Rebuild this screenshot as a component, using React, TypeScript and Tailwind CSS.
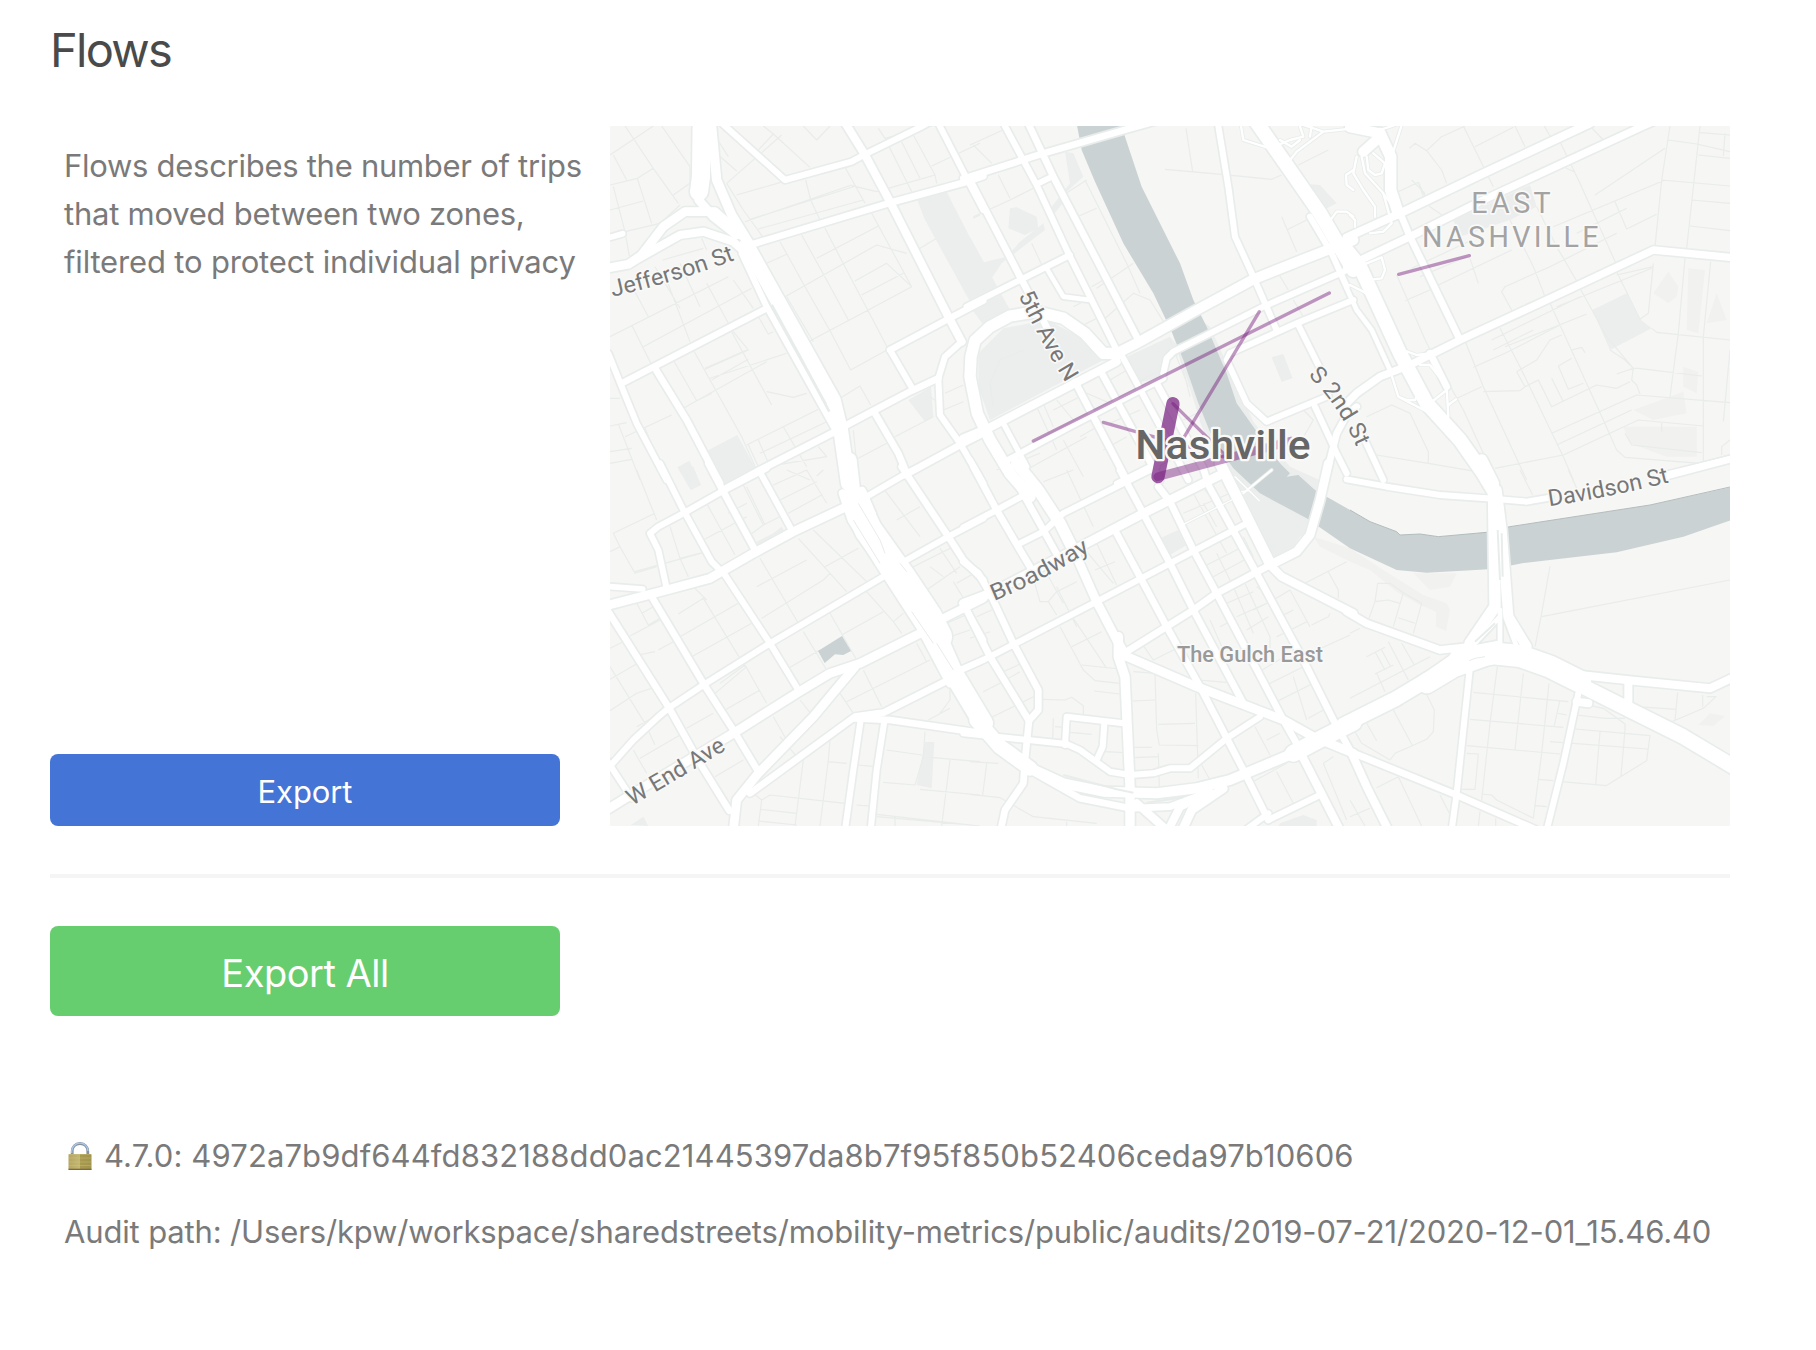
type Road = [width: number, d: string];
type Tile = { x: number; y: number; roads: Road[]; minor: string; areas: string };

const RIVER =
  'M318 0L335 90L375 185L460 370L550 520L605 635L640 720L685 850L730 960L790 1045L870 1120L1010 1195L1140 1285L1280 1350L1370 1358L1555 1348L1630 1335L1660 1329L1940 1297L2140 1250L2290 1198L2290 1100L2040 1155L1620 1220L1550 1237L1405 1250L1350 1242L1290 1245L1280 1235L1200 1205L1140 1170L1070 1130L1035 1110L985 1065L950 1070L960 1060L930 1030L850 920L800 850L770 760L710 620L670 540L630 430L515 200L465 50L455 0Z';

const tiles: Tile[] = [
  {
    x: 1800,
    y: 360,
    areas:
      'M950 235L1040 215L1065 265L1140 410L1140 550L1110 545L1000 345L975 300ZM925 840L993 800L1000 890L975 905ZM320 993L412 945L470 1050L365 1105ZM232 1042L268 1022L303 1095L272 1110Z',
    roads: [
      [54, 'M305 0L303 170L297 215'],
      [26, 'M296 215L296 240L340 290L410 345'],
      [28, 'M333 0L350 180L395 285L450 375'],
      [26, 'M20 445L85 433L125 405L190 320L255 275L345 275L430 350'],
      [24, 'M90 430L160 390L240 345L310 335L400 365L450 410'],
      [44, 'M440 375L560 590L700 840L722 930L745 1090'],
      [18, 'M425 400L500 560L600 740L706 930'],
      [17, 'M20 355L68 341'],
      [20, 'M440 378L865 250L1095 187L1150 168'],
      [18, 'M355 0L555 180L755 125L795 103L960 22L1000 0'],
      [24, 'M730 0L795 105L870 245L1045 590L1085 665'],
      [18, 'M1010 0L1105 185L1150 270'],
      [19, 'M870 690L1045 597L1150 542'],
      [18, 'M870 690L935 802'],
      [19, 'M65 790L500 565'],
      [18, 'M25 700L65 800L110 910L200 1080'],
      [20, 'M165 745L260 900L360 1090'],
      [18, 'M1085 665L1035 710L1015 775L1020 885L1080 970L1140 1075'],
      [20, 'M740 915L935 812L1015 775'],
      [20, 'M825 880L895 1000L920 1060'],
      [20, 'M715 930L480 1050L365 1112'],
      [20, 'M915 1065L1080 975L1150 940'],
    ],
    minor:
      'M75 18L160 145L235 250M30 105L160 18M40 105L80 180M30 195L112 175L160 145M112 175L155 310M30 270L130 243M40 200L75 335L88 408M75 335L180 310L240 255M185 18L270 140L270 190L220 225M355 105L410 153M350 55L385 110M380 190L545 45M475 90L520 42L490 18M520 42L630 142M610 18L650 60L690 18M380 190L430 270L490 353M410 225L550 185M617 180L632 240L660 300M435 305L755 195M450 298L760 200M475 327L790 240M735 142L795 250M755 197L830 215M835 25L855 55L1140 -20M865 75L935 215M905 65L960 175M940 45L1005 165L1010 190M830 215L1005 165M995 138L1140 70M960 385L1010 355M500 430L560 403M540 365L615 500L690 632L752 750L865 688M605 345L680 480L745 600M675 325L745 460L865 688M555 530L830 375L920 400M650 415L835 318M765 483L860 430M785 525L910 460M860 430L935 500L805 570L625 665M815 280L935 500M560 530L640 665M188 420L310 385M305 355L320 390M165 440L240 565M240 430L300 560M30 650L385 470M130 680L455 505M95 615L160 745M105 515L145 590M200 480L270 665M320 490L385 610M400 480L460 565M220 720L290 842L335 820M280 690L425 950L470 1050M315 745L440 690M315 748L445 690L400 635M335 780L445 718M330 775L560 700M250 865L500 725M395 635L515 855M500 815L580 832L620 820M475 590L505 642L520 635M440 975L655 868M480 1000L680 905M445 975L475 1040M475 960L510 1040M550 920L620 1040M500 1040L680 1010L655 980M720 835L780 798L812 855M885 950L1000 890M775 1015L860 970M760 930L775 1080M30 835L60 835M30 918L80 908M30 995L95 985M30 1030L95 1018M55 912L120 1080M75 950L215 885M135 925L160 985M1035 820L1090 795M1030 870L1090 845M990 830L1010 845M1120 295L1140 285',
  },
  {
    x: 2910,
    y: 360,
    areas:
      'M0 350L120 570L40 615L0 560ZM120 265L140 262L200 290L205 325L165 345L115 325ZM30 430L110 410L150 365L220 310L225 330L95 430L65 475ZM285 95L310 100L340 170L290 215L290 235L250 285L245 260L300 190ZM25 700L100 625L230 600L350 660L400 720L60 900L25 800ZM470 710L600 650L640 700L590 720L580 770L500 790ZM905 712L940 702L968 775L935 785ZM680 590L720 620L850 905L960 1040L1060 1085L1080 1200L990 1250L940 1330L880 1300L780 1080L690 900L610 650ZM985 190L1050 195L1100 250L1060 270Z',
    roads: [
      [20, 'M-20 175L0 170L220 100L470 28L570 0'],
      [20, 'M0 180L150 470L240 640'],
      [20, 'M315 785L470 1080'],
      [18, 'M95 0L200 195L295 400L445 700'],
      [20, 'M170 0L250 170L500 650'],
      [17, 'M205 190L250 168'],
      [18, 'M-10 560L80 515L300 405'],
      [14, 'M230 445L280 530L360 540'],
      [34, 'M450 700L400 700L345 640L280 595L200 575L120 588L60 620L15 662L3 710L0 770L22 880L60 960L120 1060L180 1130'],
      [30, 'M430 705L500 670L680 570L850 478L1000 418L1150 360'],
      [24, 'M-20 955L60 922L440 725'],
      [18, 'M110 1022L300 920L580 775'],
      [18, 'M580 760L590 715L610 695L720 640L880 560L1110 460L1150 440'],
      [18, 'M742 0L775 200L795 350L850 470L920 630'],
      [18, 'M1150 540L980 610L780 700L770 720L830 850L890 905L1075 828'],
      [18, 'M985 615L1050 745'],
      [42, 'M855 0L960 150L1050 280L1150 450'],
      [18, 'M1020 290L1085 400L1130 500'],
      [18, 'M460 715L560 900L655 1080'],
      [20, 'M390 750L570 1080'],
      [20, 'M560 790L700 1045L715 1095'],
      [16, 'M440 1090L700 960'],
      [18, 'M1035 860L1100 1000L1130 1060'],
      [20, 'M1065 1080L1100 940L1130 885L1160 860'],
      [16, 'M100 910L170 1040'],
      [7, 'M810 0L820 60L900 85L960 60L1000 50L990 20'],
      [7, 'M930 60L965 80L990 60M1150 25L1060 35L1000 15M1025 15L1020 50M1060 35L980 95L960 120'],
      [7, 'M1085 295L1100 275L1130 275L1150 290M1150 150L1128 165L1130 195L1150 210'],
    ],
    minor:
      'M85 165L120 235M10 75L65 130M10 290L120 240L220 190M0 75L110 25M345 180L470 430L510 520M345 180L420 330M300 300L380 265M280 225L350 180M585 148L755 163L905 178L935 165M648 25L668 155M985 135L1075 90M935 290L980 395M950 330L1010 300M185 370L220 445M330 620L400 585M310 560L360 535M380 505L490 430M400 600L490 520L540 540L590 620M365 500L400 480M925 460L955 510M970 540L1000 590M420 780L480 745M500 790L550 760M200 860L260 990M260 840L310 900M250 870L330 830M350 820L420 850M215 840L250 920M80 1050L210 1000M160 690L90 720L60 790L70 860M150 1060L350 950M280 960L340 1070M330 950L400 910M400 990L470 950M420 910L510 870M690 900L740 1020M640 900L700 870M615 650L660 830M600 660L655 800M960 1020L1030 900L1000 870M900 930L960 1010',
  },
  {
    x: 4050,
    y: 360,
    areas:
      'M310 300L540 195L560 260L480 300L330 350ZM727 570L830 520L870 598L905 625L780 690Z',
    roads: [
      [24, 'M-10 352L150 280L400 160L720 10'],
      [22, 'M-10 440L180 350L400 240L880 18L920 0'],
      [42, 'M-10 390L30 440L150 700L230 850L330 960L400 1060L430 1110'],
      [14, 'M-10 505L20 570L65 630L120 750'],
      [20, 'M155 290L180 350L330 660'],
      [22, 'M-10 850L20 820L90 770L180 735L330 660L590 540L910 390L1150 413'],
      [34, 'M90 40L122 110L122 210L145 280'],
      [30, 'M0 22L90 40M90 50L40 95'],
      [20, 'M240 700L290 800'],
      [18, 'M35 940L100 1080'],
      [20, 'M950 1068L1150 1015'],
      [7, 'M90 30L150 10M125 110L155 15M20 110L10 160L40 210L75 260L75 290M35 110L45 160L100 220L145 280M50 110L55 150L75 165L95 160L105 130L70 100M0 285L15 300L15 320M100 220L125 310L100 335L60 340'],
      [7, 'M50 430L95 412L105 450L95 475L70 478M0 495L50 520M120 750L145 830L170 840L195 840L205 820M145 830L240 880M210 735L240 735L290 800L295 890M160 690L200 705L240 700M240 850L290 810M295 855L318 838'],
    ],
    minor:
      'M178 85L195 70L230 92L275 150L290 190M230 92L275 50L345 18M340 18L430 200M375 80L490 22M495 18L525 80M583 18L600 48M630 65L690 190L800 435M720 18L760 60M145 215L205 187L220 230M205 187L240 260L290 295L330 290M185 180L225 220M640 140L672 155M560 260L620 380L690 500M480 300L550 440L585 530M610 320L945 180M735 225L945 85M795 245L830 327L920 283M680 340L830 265M960 18L935 180L915 380M955 60L1040 72L1140 95M1050 18L1010 385M1050 38L1140 45M1125 40L1120 108M1045 105L1140 115M935 180L1140 198M1025 240L1140 250M1020 318L1140 332M185 445L355 365M210 470L350 410M265 495L485 390M360 415L385 490M490 580L455 515L465 500L600 440L800 340M165 542L240 510M140 465L230 670L340 870L400 1000M340 650L400 800L530 1080M335 665L480 600M370 742L465 700L640 610M450 625L510 740L640 1010L670 1080M600 550L760 900L800 990L825 1012L1050 1030M690 505L770 650L850 745M800 455L870 598L895 580L910 430M1005 415L985 640L960 830M1082 425L1060 650L1060 1030M1140 690L1120 905M425 660L690 530M430 690L550 630M465 680L710 582M800 465L910 440M620 560L905 445M905 625L920 637L1140 660M780 690L825 720L850 745L865 745L1055 768M800 762L850 745L845 780L860 795L870 822M500 755L560 720L600 660L635 645M500 755L525 800L565 780L605 860L740 795L800 805L840 785M665 690L695 682L705 698M625 738L665 715M625 738L655 808L700 790M605 775L640 845M400 815L510 812L525 800M605 940L860 825L1140 848M620 975L845 870M640 1005L865 900L1060 918M825 940L845 975L1055 998M50 890L125 855L180 880L235 995L235 1030M80 1005L235 1030L380 1055M435 1045L640 1005M310 840L395 800M1140 960L1115 980L1115 1005M935 905L935 935',
  },
  {
    x: 1800,
    y: 1410,
    areas:
      'M338 0L395 -20L450 0L365 55ZM240 0L280 -10L303 45L272 60ZM470 215L520 190L545 170L560 195L480 235ZM975 815L1003 817L995 955L950 945ZM92 1065L130 1040L145 1068Z',
    roads: [
      [26, 'M20 407L200 360L330 325L460 250L580 185L740 110'],
      [17, 'M20 349L128 357'],
      [18, 'M200 355L175 240L150 190L175 170L250 130L365 65L500 -5'],
      [18, 'M180 -20L250 120L335 275L375 315L510 520L595 660'],
      [20, 'M325 -20L370 65L465 240'],
      [18, 'M482 10L575 180'],
      [20, 'M155 380L310 640L400 780L475 905'],
      [20, 'M25 425L205 710L300 880L388 1022'],
      [18, 'M20 900L100 810L170 745L205 715L310 645L510 520L850 320'],
      [18, 'M20 870L95 985'],
      [26, 'M20 1020L100 970L400 790L590 670L690 610L780 580L960 490'],
      [24, 'M960 490L1030 445L1150 385'],
      [26, 'M765 590L640 740L475 910L410 990L400 1080'],
      [20, 'M450 970L765 740L850 728L1045 630'],
      [20, 'M765 745L870 750L1150 790'],
      [18, 'M782 750L760 900L735 1080'],
      [18, 'M852 760L830 900L812 1080'],
      [18, 'M920 270L1045 200L1150 145'],
      [18, 'M800 80L920 10L950 -5'],
      [20, 'M905 -10L1045 200L1090 270L1150 330'],
      [18, 'M1100 420L1150 510'],
      [18, 'M1080 600L1150 570'],
      [24, 'M728 70L755 150L850 300L960 470L1050 640'],
      [44, 'M748 -30L758 60L775 110'],
      [24, 'M786 62L815 130'],
      [82, 'M775 115L805 180L905 320L985 440L1015 500'],
      [58, 'M985 440L1060 610L1150 760'],
      [18, 'M1110 -30L1150 40'],
    ],
    minor:
      'M110 0L170 150M30 245L60 230L40 190L165 130M60 230L105 310L170 290M105 305L320 245M210 170L240 265L265 320M240 265L320 245M300 215L440 140M265 140L330 270M320 100L405 255M430 45L490 165L450 195M490 165L560 130M440 50L495 165M385 130L440 100M520 45L620 0M540 90L650 35M565 130L665 75M620 0L680 100M650 18L670 0M480 265L595 460M470 350L620 270M485 445L670 330L690 310M595 205L740 365M640 180L800 335M675 290L775 235M630 30L560 0M235 432L310 385L435 590M285 355L320 390M240 500L415 400M275 560L455 460M110 400L145 465L180 445M125 430L160 410M90 498L180 450M115 555L165 545M175 540L220 515M30 535L70 515M30 628L130 570M30 590L135 760L165 825M30 722L110 670L155 655M110 770L235 700M260 775L340 730M120 865L240 795M100 840L140 910M345 920L430 870M360 640L435 585L500 700M375 720L480 660M345 670L440 590M400 770L600 660M520 740L560 810M600 690L640 740M540 800L590 860M565 595L660 540M610 485L680 600M690 430L770 570M725 495L850 425M800 365L880 455L905 490M880 455L910 430M850 55L960 200M890 150L960 110M940 290L1060 230M1020 235L1070 310M980 360L1080 290M1060 335L1100 400M1070 340L1140 300M990 290L1030 320M1040 460L1110 430M1050 500L1110 480M740 695L990 570M790 600L845 710M720 670L760 730M950 520L980 575M985 750L1050 715M1050 650L1050 690L1020 730M610 870L585 1068M690 810L685 870L660 1068M685 875L740 880M485 990L510 975L735 1000M485 990L475 1068M480 1018L590 1030M475 1053L590 1065M460 970L485 990M775 885L825 890M770 1005L825 1010M860 840L965 855M975 785L970 860L945 945L850 937M990 862L1140 875M1050 870L1025 1068M960 958L1140 975M830 1033L1140 1068M830 1040L1110 1065M885 1040L885 1068',
  },
  {
    x: 2910,
    y: 1410,
    areas: 'M570 205L625 180L650 225L600 255ZM930 1060L1000 1035L1040 1050L1040 1080L920 1080Z',
    roads: [
      [26, 'M-20 400L60 370L340 225L520 130L760 10'],
      [18, 'M-20 597L60 560L380 395L600 280L830 160'],
      [20, 'M470 545L590 470L670 420L740 370L900 285'],
      [26, 'M900 285L980 245L1020 195L1050 90L1075 -20'],
      [18, 'M150 220L220 185L280 130L470 35L560 -10'],
      [18, 'M-20 172L80 120L200 55'],
      [20, 'M10 -10L80 120L150 240L180 290'],
      [20, 'M120 0L220 180L270 270'],
      [34, 'M140 -20L205 60L270 160L315 250'],
      [26, 'M315 250L380 395L440 510L470 560'],
      [20, 'M-20 275L25 310L60 370L130 520L205 660L205 720L177 752L60 560L-10 420'],
      [20, 'M177 752L165 870L160 940L105 1020L92 1080'],
      [18, 'M-20 790L290 822L330 840L420 905L480 915L550 910L600 895L660 895L770 805L870 740'],
      [18, 'M285 825L290 740L460 760'],
      [18, 'M403 760L398 830L380 870'],
      [28, 'M445 500L445 560L465 620L480 950L480 1080'],
      [26, 'M460 555L680 650L940 750L1030 800L1150 850'],
      [20, 'M440 190L590 470L690 650L820 900L895 1050'],
      [20, 'M450 0L600 280L670 420L820 700'],
      [20, 'M565 50L600 95L670 240L740 370L940 750L985 830'],
      [20, 'M715 45L860 310L1000 570L1090 750L1140 840'],
      [32, 'M750 -20L900 280'],
      [24, 'M900 285L935 320L1150 430'],
      [44, 'M20 750L90 830L180 895'],
      [30, 'M160 885L280 940L400 965L560 970L680 955L780 930L970 850'],
      [20, 'M180 900L330 985L480 1015L600 1010L720 965'],
      [50, 'M970 850L1060 803L1150 757'],
      [26, 'M635 1085L665 1020L760 955'],
      [24, 'M595 1080L630 1010L700 975M500 1000L590 1080'],
      [18, 'M820 1085L895 1030M895 1050L1050 975'],
      [24, 'M1000 865L1110 1080'],
      [6, 'M820 70L905 0'],
      [4, 'M795 20L868 92M815 65L835 62M640 163L785 90'],
    ],
    minor:
      'M220 35L310 0M290 0L370 170M180 290L210 395L235 395L260 435M235 395L260 365L320 335M260 350L320 470M350 245L430 340M375 300L435 275M380 220L440 345M270 470L340 600L375 632L450 640M305 530L395 485M310 445L410 595M335 585L450 597M373 663L450 672M230 310L280 400M0 505L60 485M20 440L65 420M40 665L90 640L150 605M65 742L190 680M90 610L155 580M215 688L285 690L305 682L340 707L340 735M250 745L248 810M255 770L285 772M300 787L365 793M0 875L85 880M50 880L38 975M0 973L90 983L190 1040L380 1060M290 1055L290 1068M405 845L460 848M555 610L560 780L568 825L685 827M677 670L685 925M487 693L555 690M565 763L675 760M490 832L545 832M490 863L565 860M565 850L568 955M490 605L555 610M685 630L770 637M515 520L550 570L640 525M670 70L770 250M640 130L780 70M700 100L740 170M705 60L760 130M700 290L810 235M730 320L840 260M740 250L790 350M790 350L850 490M820 330L900 500L900 560M770 400L850 365M800 440L890 400M830 480L895 440M850 420L900 395M910 390L960 360M960 360L1020 470M930 440L970 420M920 500L1010 455M1005 340L1130 275M1075 305L1105 360L1105 385M1025 465L1075 440L1080 430M1020 550L1140 495M860 610L960 550M880 650L1000 590M910 700L1030 640M970 620L1010 750M1015 745L1060 720M750 470L790 450M720 450L760 540M695 885L720 930M855 770L900 855M890 810L930 790M840 940L950 880M920 905L970 1000M1060 880L1130 1050M1060 880L1090 860M820 200L850 260M860 350L920 400',
  },
  {
    x: 4050,
    y: 1410,
    areas: '',
    roads: [
      [18, 'M-10 28L110 50L270 75L410 85L530 95L600 83'],
      [18, 'M945 15L1150 -35'],
      [22, 'M-10 425L50 460L270 540L360 530'],
      [34, 'M395 -30L430 40L432 180L435 410L360 520'],
      [30, 'M440 60L455 180L475 440L530 530'],
      [14, 'M450 420L450 520M470 450L500 530M450 440L370 525'],
      [44, 'M-20 765L140 685L240 625L340 555L440 535'],
      [60, 'M230 640L310 592L400 560'],
      [66, 'M330 568L430 550L510 558L600 590L690 635'],
      [44, 'M660 625L700 650L860 730L1000 800L1150 890'],
      [24, 'M690 615L850 632L1080 655L1150 622'],
      [24, 'M835 640L835 705'],
      [20, 'M-20 835L0 845L320 975L560 1080'],
      [24, 'M5 850L50 950L115 1080'],
      [18, 'M360 590L320 970L305 1080'],
      [18, 'M685 670L640 880L590 1080'],
      [24, 'M680 695L715 700'],
    ],
    minor:
      'M510 0L548 75M655 0L680 55M600 288L575 430L555 530M575 440L1140 330M57 445L75 395L83 340L120 340L160 368L215 400L190 490M75 395L115 390L150 400M160 368L130 470M145 443L195 460M0 490L30 475M50 560L105 532M75 545L105 600M95 540L122 590M115 515L175 630M155 520L193 585M75 612L130 585M80 610L105 665M0 685L240 560M228 670L253 720L250 785L230 808L185 828L135 850L120 870L35 820L15 785M130 720L188 828M50 760L80 812M370 667L655 695M360 748L640 772M350 827L630 852M442 590L420 760L395 990M520 610L495 840M597 640L575 850L550 1045M630 690L612 770M625 730L650 735M350 850L385 852L375 958L335 958M395 972L425 975L440 990L550 1045M565 928L610 932M555 1007L590 1010M600 815L893 837M675 777L900 797L890 872L768 947L635 935M750 785L737 945M680 735L765 745L825 745M690 700L760 715L825 762L825 780L813 918M860 710L980 718M983 668L975 750M1058 675L1058 710M1070 680L1098 680L1060 715L965 755M850 710L905 735L940 765M80 953L145 920L215 1068M0 1040L60 1015M0 990L45 1068M270 975L298 1030M390 1025L385 1068M437 1045L437 1068',
  },
];

const flows: Road[] = [
  [40, 'M609 851L564 1070'],
  [26, 'M564 1070L965 963'],
  [10, 'M190 963L1078 519'],
  [10, 'M868 575L640 955'],
  [10, 'M609 851L760 1000'],
  [10, 'M400 907L760 1010'],
  [10, 'M1286 463L1498 407'],
];

function FlowMap() {
  return (
    <svg viewBox="1830 378 3360 2100" className="block h-[700px] w-[1120px] shrink-0 bg-[#f6f6f4]" role="img" aria-label="Nashville flows map">
      <defs>
        <path id="jefferson" d="M1838 890Q2010 852 2215 776" />
        <path id="fifth" d="M3055 886Q3114 1012 3199 1152" />
        <path id="second" d="M3924 1126Q4018 1218 4073 1348" />
        <path id="broadway" d="M2983 1803Q3121 1747 3271 1652" />
        <path id="davidson" d="M4648 1519Q4828 1492 5028 1442" />
        <path id="westend" d="M1896 2418Q2046 2330 2186 2245" />
      </defs>

      <path
        fill="#f1f1ef"
        d="M4960 880L5005 815L5035 860L5030 890L5005 910ZM5065 805L5115 810L5095 1000L5060 990ZM5120 970L5150 880L5180 960ZM5050 1100L5095 1115L5090 1180L5050 1160ZM4900 1230L5050 1175L5060 1240L4960 1260ZM4870 1280L5090 1280L5090 1370L5000 1370L4890 1330ZM4240 1720L4370 1720L4350 1760L4290 1770ZM3940 1610L4050 1645L4150 1710L4270 1785L4340 1810L4350 1830L4338 1893L4308 1880L4308 1835L4260 1815L4190 1775L4110 1710L4050 1685L3960 1640ZM5095 2175L5130 2140L5175 2148L5140 2178Z"
      />
      {tiles.map((t, i) => (
        <path key={i} transform={`translate(${t.x} ${t.y})`} d={t.areas} fill="#eceeed" />
      ))}
      {tiles.map((t, i) => (
        <path key={i} transform={`translate(${t.x} ${t.y})`} d={t.minor} fill="none" stroke="#e8ecea" strokeWidth="3.4" strokeLinejoin="round" />
      ))}
      <path transform="translate(2910 360)" d={RIVER} fill="#cad2d3" />
      <path d="M4050 1530L4110 1565L4190 1595L4200 1605L4260 1602L4315 1610L4460 1597L4530 1580L4950 1515L5190 1461" fill="none" stroke="#b4bdbe" strokeWidth="3" />
      <path d="M2454 1953L2526 1908L2553 1953L2530 1965L2505 1963L2474 1989Z" fill="#cad2d3" />

      <g fill="none" stroke="#e8edeb" strokeLinecap="round" strokeLinejoin="round">
        {tiles.map((t, i) => (
          <g key={i} transform={`translate(${t.x} ${t.y})`}>
            {t.roads.map(([w, d], j) => (
              <path key={j} d={d} strokeWidth={w < 10 ? w + 5 : w + 10} />
            ))}
          </g>
        ))}
      </g>
      <g fill="none" stroke="#ffffff" strokeLinecap="round" strokeLinejoin="round">
        {tiles.map((t, i) => (
          <g key={i} transform={`translate(${t.x} ${t.y})`}>
            {t.roads.map(([w, d], j) => (
              <path key={j} d={d} strokeWidth={w} />
            ))}
          </g>
        ))}
      </g>
      <g fill="none" stroke="#e8edeb" strokeLinejoin="round">
        <path d="M2315 915L2400 1070L2488 1235" strokeWidth="8" />
        <path d="M4493 1590L4500 1740M4505 1600L4508 1730M4425 1925L4485 1870M3190 2325L3350 2368L3400 2378M3440 2408L3550 2392" strokeWidth="6" />
        <path d="M2575 1510L2640 1620L2655 1660M2700 1690L2720 1715M2560 1560L2640 1690M2735 1835L2800 1930M2810 1930L2860 2010M4408 1982L4425 1975L4455 1970" strokeWidth="3" />
      </g>

      <g transform="translate(2910 360)" fill="none" stroke="#751a7d" strokeLinecap="round">
        {flows.map(([w, d], i) => (
          <path key={i} d={d} strokeWidth={w} strokeOpacity={i === 0 ? 0.7 : 0.45} />
        ))}
      </g>

      <g
        fill="#777777"
        stroke="#f9f9f8"
        strokeWidth="10"
        strokeLinejoin="round"
        className="font-[Roboto,sans-serif] [paint-order:stroke]"
        fontSize="69"
      >
        <text textLength="384" lengthAdjust="spacingAndGlyphs"><textPath href="#jefferson">Jefferson St</textPath></text>
        <text textLength="300" lengthAdjust="spacingAndGlyphs"><textPath href="#fifth">5th Ave N</textPath></text>
        <text textLength="262" lengthAdjust="spacingAndGlyphs"><textPath href="#second">S 2nd St</textPath></text>
        <text textLength="325" lengthAdjust="spacingAndGlyphs"><textPath href="#broadway">Broadway</textPath></text>
        <text textLength="368" lengthAdjust="spacingAndGlyphs"><textPath href="#davidson">Davidson St</textPath></text>
        <text textLength="330" lengthAdjust="spacingAndGlyphs"><textPath href="#westend">W End Ave</textPath></text>
        <text x="3531" y="1985" fontSize="68" fontWeight="500" fill="#999999" textLength="438" lengthAdjust="spacingAndGlyphs">The Gulch East</text>
        <g fill="#a3a3a3" fontSize="86">
          <text x="4414" y="638" textLength="238">EAST</text>
          <text x="4266" y="741" textLength="530">NASHVILLE</text>
        </g>
        <text x="3406" y="1377" fontSize="123" fontWeight="500" fill="#666666" strokeWidth="14" textLength="526" lengthAdjust="spacingAndGlyphs">Nashville</text>
      </g>
    </svg>
  );
}

function LockIcon() {
  return (
    <svg viewBox="0 0 24 28" className="h-7 w-6 shrink-0" aria-hidden="true">
      <defs>
        <linearGradient id="brass">
          <stop stopColor="#b5a660" />
          <stop offset=".5" stopColor="#c3b873" />
          <stop offset=".5" stopColor="#a89b50" />
          <stop offset="1" stopColor="#a1934b" />
        </linearGradient>
      </defs>
      <path d="M4.2 13V9.500C4.200 4.500 7.500 1.500 12 1.500S19.800 4.500 19.800 9.500V13" fill="none" stroke="#87919e" strokeWidth="2.800" />
      <path d="M3.700 11V9C4 4.500 7.500 1.200 12 1.200S19.700 4.500 20 9" fill="none" stroke="#a9c8ec" strokeWidth="1.300" />
      <rect x=".5" y="12" width="23" height="16" rx=".8" fill="url(#brass)" />
      <path d="M.5 26.700H23.500V28H.5Z" fill="#80683f" />
      <path d="M1 12.500H23M1 16H23M1 20H23M1 23.500H23" stroke="#d3ca8d" strokeWidth=".6" opacity=".6" />
    </svg>
  );
}

export default function App() {
  return (
    <main className="flex h-[1350px] w-[1816px] flex-col bg-white pr-[86px] pl-[50px] font-[Inter,sans-serif] text-[31px] leading-[48px] text-[#7a7a7a]">
      <h1 className="mt-[20px] text-[47px] leading-[60px] tracking-[-1.7px] text-[#4a4a4a]">Flows</h1>
      <section className="mt-[46px] flex h-[700px] justify-between">
        <div className="flex w-[550px] flex-col justify-between">
          <p className="pt-[16px] pl-[14px] whitespace-nowrap">
            <span className="block tracking-[-0.28px]">Flows describes the number of trips</span>
            <span className="block tracking-[-0.25px]">that moved between two zones,</span>
            <span className="block tracking-[-0.17px]">filtered to protect individual privacy</span>
          </p>
          <button className="h-[72px] w-[510px] rounded-lg bg-[#4374d6] pt-1 tracking-[-0.1px] text-white">Export</button>
        </div>
        <FlowMap />
      </section>
      <hr className="mt-12 h-1 shrink-0 border-0 bg-[#f5f5f5]" />
      <button className="mt-12 h-[90px] w-[510px] rounded-lg bg-[#66ce6f] pt-1 text-[38px] tracking-[-0.5px] text-white">Export All</button>
      <footer className="mt-[116px] pl-[14px] whitespace-nowrap">
        <p className="flex h-12 items-center pl-1">
          <LockIcon />
          <span className="ml-[12px] tracking-[0.12px]">4.7.0: 4972a7b9df644fd832188dd0ac21445397da8b7f95f850b52406ceda97b10606</span>
        </p>
        <p className="mt-[28px] tracking-[-0.15px]">Audit path: /Users/kpw/workspace/sharedstreets/mobility-metrics/public/audits/2019-07-21/2020-12-01_15.46.40</p>
      </footer>
    </main>
  );
}
